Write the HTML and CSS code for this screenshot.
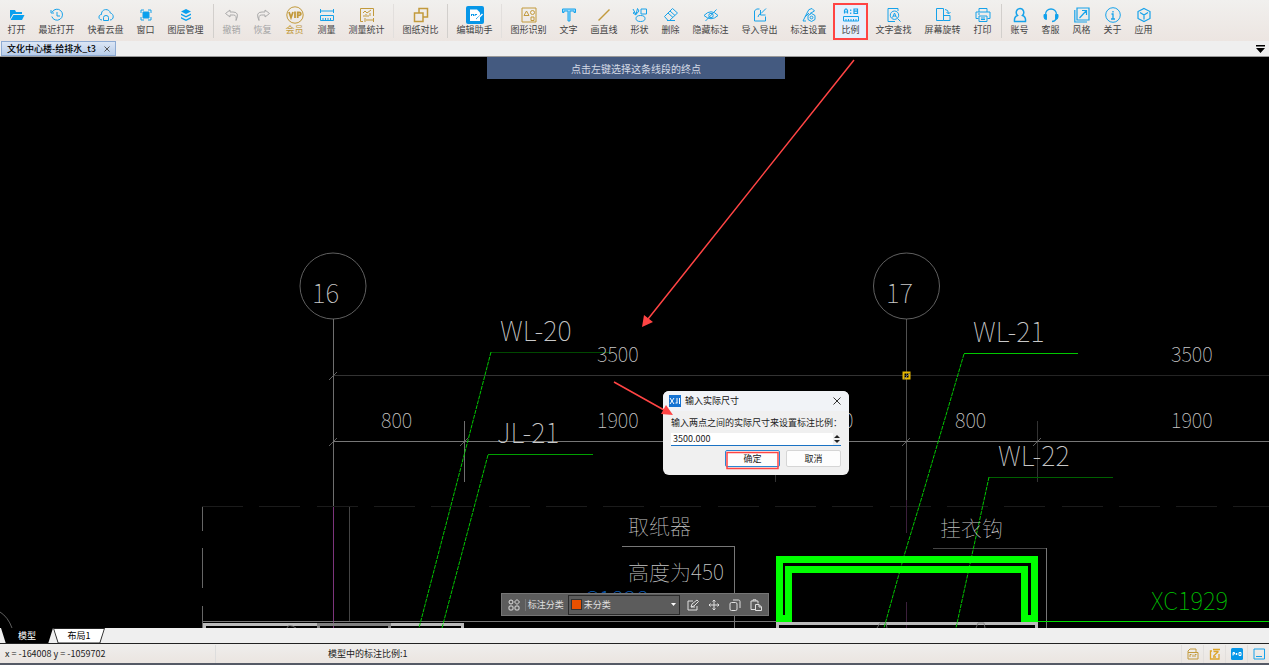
FILE: index.html
```html
<!DOCTYPE html>
<html lang="zh-CN">
<head>
<meta charset="utf-8">
<title>文化中心楼-给排水_t3</title>
<link rel="stylesheet" href="styles.css">
</head>
<body>
<div class="app">
  <header class="toolbar">
    <div class="group group-first">
      <button class="tool"><svg viewBox="0 0 16 16"><path fill="#0aa0ee" d="M1 3h5l1 2h6v2H4L1 12zM4.500 8H15.500L13 13H1.500z"/></svg>打开</button>
      <button class="tool wide"><svg viewBox="0 0 16 16" class="blue"><path d="M3.200 5A5.500 5.500 0 1 1 2.800 9.500M2 3v3h3M8 5v4h3"/></svg>最近打开</button>
      <button class="tool wide"><svg viewBox="0 0 16 16" class="blue"><path d="M4 13C0 13 0 7.500 3.500 7.500 3 1.500 11.500 1 12.300 6 16.500 7 16 13 12 13M5.500 13.500V10.500A2.500 2 0 0 1 10.500 10.500V13.500z"/></svg>快看云盘</button>
      <button class="tool"><svg viewBox="0 0 16 16" class="blue"><path fill="#0aa0ee" d="M5 5h6v6H5z"/><path d="M3 6V3h3M10 3h3v3M13 10v3h-3M6 13H3v-3"/></svg>窗口</button>
      <button class="tool wide"><svg viewBox="0 0 16 16"><path fill="#0aa0ee" d="M8 2l5 2.500L8 7 3 4.500zM3 6.500L8 9l5-2.500V8l-5 2.500L3 8zM3 10l5 2.500 5-2.500v1.500L8 14l-5-2.500z"/></svg>图层管理</button>
    </div>
    <span class="sep"></span>
    <div class="group">
      <button class="tool dim"><svg viewBox="0 0 16 16" class="gray"><path d="M6 3L1.500 6.500 6 10V8h3.500Q13 8 12 13.500 16 5 9 5H6z"/></svg>撤销</button>
      <button class="tool dim"><svg viewBox="0 0 16 16" class="gray"><path d="M10 3l4.500 3.500L10 10V8H6.500Q3 8 4 13.500 0 5 7 5h3z"/></svg>恢复</button>
      <button class="tool vip"><svg viewBox="0 0 18 18" class="gold big"><circle cx="9" cy="9" r="8.200"/><path stroke-width="1.800" d="M3 6l2 5.500L7 6M9 5.500V12M11.700 12V6.500h1.500q2 0 1.500 2-.5 1-3 1"/></svg>会员</button>
      <button class="tool"><svg viewBox="0 0 16 16" class="blue"><path d="M1.500 2v4M14.500 2v4M2 4h12M1.500 8.500h13v5h-13zM4 11v2M6.500 11v2M9 11v2M11.500 11v2"/></svg>测量</button>
      <button class="tool wide"><svg viewBox="0 0 16 16" class="gold"><path d="M4 14.500H1.500v-13h13V9M4 6l2-2 2 2 4-3M5 8v2M7 7v3M9 8v2M11 6v3M6 11v4M14.500 11v4M7 13h7"/></svg>测量统计</button>
    </div>
    <span class="sep faint"></span>
    <div class="group">
      <button class="tool wide"><svg viewBox="0 0 16 16" class="gold"><path stroke-width="1.500" d="M6 6V1.500h8.500V10H10M1.500 6H10v8.500H1.500z"/></svg>图纸对比</button>
    </div>
    <span class="sep"></span>
    <div class="group">
      <button class="tool wide"><svg viewBox="0 0 18 18" class="big"><rect width="18" height="18" rx="2" fill="#0797e8"/><path fill="#fff" d="M4 3.500h7l3 3V15H4z"/><path fill="none" stroke="#0797e8" d="M5.500 10V8l1 1 1-1v2M9 10V8.500h2M10 13l6-5"/><path stroke="#fff" stroke-width="1.500" d="M11 13.500L16.500 8"/></svg>编辑助手</button>
    </div>
    <span class="sep faint"></span>
    <div class="group group-main">
      <button class="tool wide"><svg viewBox="0 0 16 16" class="gold"><path d="M1 1h14v14H1zM3 8.500L5.500 4 8 8.500zM10 10h3v3.500h-3z"/><circle cx="11.500" cy="5.500" r="2"/></svg>图形识别</button>
      <button class="tool"><svg viewBox="0 0 16 16" class="blue"><path fill="#9bdcff" d="M1.500 2h13v3.500h-1.500V4H9v10H7V4H3v1.500H1.500z"/></svg>文字</button>
      <button class="tool mid"><svg viewBox="0 0 16 16" class="gold"><path stroke-width="1.500" d="M2.500 13.500l11-11"/></svg>画直线</button>
      <button class="tool"><svg viewBox="0 0 16 16" class="blue"><path d="M9 2h5.500v5H9zM1 2l3 5.500L7 4 5.500 1.500 4 7.500M3 5L1 6l3 2"/><ellipse cx="8.500" cy="11.500" rx="4.500" ry="3"/></svg>形状</button>
      <button class="tool"><svg viewBox="0 0 16 16" class="blue"><path d="M1.500 9.500L9.500 1.500l5 4.500-8 7.500H5zM5 6l5 4.500M4 13.500h8M7 4l5 4.500"/></svg>删除</button>
      <button class="tool wide"><svg viewBox="0 0 16 16" class="blue"><path d="M1 8.500Q8 1 15 8.500 8 15 1 8.500zM2.500 14L13.500 2.500"/><circle cx="8" cy="8.500" r="2.200"/></svg>隐藏标注</button>
      <button class="tool wide"><svg viewBox="0 0 16 16" class="blue"><path d="M7.500 2H4.500L2.500 4v10h11V9.500M14 1.500L9 6.500M8.500 3v5h5M6 10q.5-3 3-3.500"/></svg>导入导出</button>
      <button class="tool wide"><svg viewBox="0 0 16 16" class="blue"><path d="M11 1.500l2.500 2.500L9 6.500M11 1.500Q7 2 6.500 5L2 14h3M4 10l4-4"/><path d="M10.500 6.500l3.500 2v4l-3.500 2-3.500-2v-4z"/><circle cx="10.500" cy="10.500" r="1.400"/></svg>标注设置</button>
      <button class="tool active"><svg viewBox="0 0 16 16" class="blue"><path stroke-width="1.200" d="M1.500 6.500V3.500L2.500 2h1l1 1.500v3M1.500 5h3M7.700 2.500v1.500M7.700 5.500V7M11 2h3.500v4.500H11zM11 4.200h3.500"/><path d="M.5 9.500h15v4.500H.5zM3 12v2M5.500 12v2M8 12v2M10.500 12v2M13 12v2"/></svg>比例</button>
      <button class="tool wide"><svg viewBox="0 0 16 16" class="blue"><path d="M9 14.500H2V1.500h10V4M11.500 11.500l3 3M6.500 10.500L8.500 6l2 4.500M7 9h3"/><circle cx="8.500" cy="8.200" r="4.200"/></svg>文字查找</button>
      <button class="tool wide"><svg viewBox="0 0 16 16" class="blue"><path d="M1.500 1.500h7v12h-7zM8.500 8.500h6.500v5H8.500M10 2.500q3.500 0 3.500 4M11.500 5l2 2L15.500 5"/></svg>屏幕旋转</button>
      <button class="tool"><svg viewBox="0 0 16 16" class="blue"><path d="M4 5V1.500h8V5M3.500 11.500H1V5h14v6.500h-2.500M4 9h8v5.500H4zM3 7h2M6 11h4M6 12.500h4"/></svg>打印</button>
    </div>
    <span class="sep"></span>
    <div class="group">
      <button class="tool"><svg viewBox="0 0 16 16" class="blue"><path stroke-width="1.500" d="M5.500 8.500C3 6 4.500 1.500 8 1.500s5 4.500 2.500 7Q14 9.500 13.500 14.500h-11Q2 9.500 5.500 8.500z"/></svg>账号</button>
      <button class="tool"><svg viewBox="0 0 16 16" class="blue"><path stroke-width="1.300" d="M2.500 8C2 0 14 0 13.500 8M13 12q-1 2.500-4 2.500"/><path fill="#0aa0ee" d="M1 7.500h2.500v5Q1 12.500 1 10zM12.500 7.500H15V10q0 2.500-2.500 2.500z"/></svg>客服</button>
      <button class="tool"><svg viewBox="0 0 16 16" class="blue"><path stroke-width="1.200" d="M.8 3v12H13M3 1h12v12H3zM5.500 11L12 4M8 3.500h4.500V8"/></svg>风格</button>
      <button class="tool"><svg viewBox="0 0 16 16" class="blue"><circle cx="8" cy="8" r="7.300"/><path stroke-width="1.300" d="M8 4v1.500M6.500 7H8v5M6 12h4"/></svg>关于</button>
      <button class="tool"><svg viewBox="0 0 16 16" class="blue"><path stroke-width="1.200" d="M8 1.500l6 3v7l-6 3-6-3v-7zM4 5.500l4 2.500 4-2.500M8 8v4.500"/></svg>应用</button>
    </div>
  </header>

  <nav class="filebar">
    <div class="filetab"><span>文化中心楼-给排水_t3</span><button class="tabclose" aria-label="关闭标签"><svg viewBox="0 0 6 6"><path d="M.5 .5l5 5M5.500 .5l-5 5"/></svg></button></div>
    <button class="tablist" aria-label="标签列表"><svg viewBox="0 0 9 8"><path d="M0 0h9v1.500H0zM0 3h9L4.500 8z"/></svg></button>
  </nav>

  <main class="canvas">
    <svg class="drawing" viewBox="0 57 1269 571" preserveAspectRatio="xMinYMin slice">
      <g class="crisp">
        <path stroke="#6e6e6e" d="M333.500 319V507M464.500 421V482"/>
        <path stroke="#333" d="M333 375.500H906M1037.500 421V482M775.500 421V482"/>
        <path stroke="#242424" d="M906 375.500H1269"/>
        <path stroke="#777" d="M333 441.500H1269"/>
        <path stroke="#505050" d="M906.500 319V500"/>
        <path stroke="#1b1b1b" stroke-dasharray="41 16.300" d="M202 506.500H1269"/>
        <path stroke="#666" d="M202.500 507v24M202.500 548v40M202.500 606v22"/>
        <path stroke="#7c347c" d="M333.500 507V628"/>
        <path stroke="#3c203c" d="M906.500 500v33M906.500 602v26"/>
        <path stroke="#444" d="M349.500 507V622M933 548.500H1047"/>
        <path stroke="#777" d="M203 621.500H776M622 546.500H734.500V628M1046.500 548V628"/>
        <path stroke="#bbb" stroke-width="3" d="M203 624.500H464M204.500 623v5M462.500 623v5"/>
        <path stroke="#808080" stroke-width="3" d="M317 624.500H391M318.500 623v5M389.500 623v5"/>
        <path stroke="#bbb" stroke-width="3" d="M776 623.500H1038M777.500 623v5M1036.500 623v5"/>
        <path stroke="#0d0" d="M1038 621.500H1269"/>
        <path stroke="#004800" d="M491 352.500H612"/>
        <path stroke="#00a000" d="M488 454.500H593"/>
        <path stroke="#00c800" d="M964 353.500H1078"/>
        <path stroke="#006000" d="M989 477.500H1113"/>
      </g>
      <g fill="none" stroke="#777" stroke-width=".8">
        <circle cx="333" cy="286" r="33"/><circle cx="906.500" cy="286" r="33"/>
        <path d="M329 380l8-8M329 446l8-8M460 446l8-8M902 446l8-8M1033 446l8-8M0 612q8 5 12 16M287 628q1-5 9 0M877 628l3-5h6l1 5M976 628l2-5h6l1 5"/>
      </g>
      <g fill="none" stroke="#00c800" stroke-dasharray="4 1">
        <path d="M491 352L419 628M488 455L442 628M964 354L921 500 904 556"/>
        <path d="M989 477L984 500 956 628M904 556L884 628"/>
      </g>
      <path fill="#0f0" fill-rule="evenodd" d="M776 556H1038V622H1021V573H792V622H776zM783 563V615H785V566H1028V615H1031V563z"/>
      <g class="cad">
        <text class="t-axis" x="312" y="303">16</text>
        <text class="t-axis" x="886" y="303">17</text>
        <text class="t-tag" x="500" y="341">WL-20</text>
        <text class="t-tag" x="973" y="342">WL-21</text>
        <text class="t-tag" x="998" y="466">WL-22</text>
        <text class="t-tag" x="497" y="443">JL-21</text>
        <text class="t-dim" x="597" y="362">3500</text>
        <text class="t-dim" x="1171" y="362">3500</text>
        <text class="t-dim" x="381" y="428">800</text>
        <text class="t-dim" x="955" y="428">800</text>
        <text class="t-dim" x="843" y="428">0</text>
        <text class="t-dim" x="597" y="428">1900</text>
        <text class="t-dim" x="1171" y="428">1900</text>
        <text class="t-note" x="628" y="534">取纸器</text>
        <text class="t-note" x="628" y="580">高度为450</text>
        <text class="t-note" x="940" y="536">挂衣钩</text>
        <text class="t-code green" x="1151" y="610">XC1929</text>
        <text class="t-code azure" x="584" y="609">C1828</text>
      </g>
      <path class="grip" d="M903.500 372.500h6v6h-6z"/>
      <path stroke="#777" d="M904 379l6-6"/>
    </svg>

    <div class="prompt">点击左键选择这条线段的终点</div>

    <form class="dialog" onsubmit="return false">
      <div class="dialog-title">
        <svg class="dialog-logo" viewBox="0 0 12 12"><path fill="#1673d2" d="M0 0h12v12H0z"/><path fill="none" stroke="#fff" d="M1 3l4 6M5 3L1 9M8 3v5M6.500 8h2M10.500 3v6"/></svg>
        <span>输入实际尺寸</span>
        <button type="button" class="dialog-close" aria-label="关闭"><svg viewBox="0 0 8 8"><path d="M.5 .5l7 7M7.500 .5l-7 7"/></svg></button>
      </div>
      <div class="dialog-body">
        <label for="size">输入两点之间的实际尺寸来设置标注比例：</label>
        <div class="spin">
          <input id="size" type="text" value="3500.000">
          <div class="spin-buttons">
            <button type="button" aria-label="增加"><svg viewBox="0 0 6 3"><path d="M0 3L3 0l3 3z"/></svg></button>
            <button type="button" aria-label="减少"><svg viewBox="0 0 6 3"><path d="M0 0h6L3 3z"/></svg></button>
          </div>
        </div>
        <div class="dialog-actions">
          <button class="btn primary">确定</button>
          <button type="button" class="btn">取消</button>
        </div>
      </div>
    </form>

    <div class="markbar">
      <button aria-label="全部"><svg viewBox="0 0 12 12"><circle cx="3" cy="3" r="2"/><path d="M9 .5L11.500 3 9 5.500 6.500 3z"/><rect x="1" y="7" width="4" height="4" rx="1"/><rect x="7" y="7" width="4" height="4" rx="1"/></svg></button>
      <label for="kind">标注分类</label>
      <div class="pick"><span class="swatch"></span><select id="kind"><option>未分类</option></select><svg class="caret" viewBox="0 0 5 3"><path d="M0 0h5L2.500 3z"/></svg></div>
      <button aria-label="编辑"><svg viewBox="0 0 12 12"><path d="M6 2H1v9h9V7M4 8l1-3 5-4 1.500 1.500L7 7zM4 8h4"/></svg></button>
      <button aria-label="移动"><svg viewBox="0 0 12 12"><path d="M6 1v10M1 6h10M4.500 2.500L6 1l1.500 1.500M4.500 9.500L6 11l1.500-1.500M2.500 4.500L1 6l1.500 1.500M9.500 4.500L11 6 9.500 7.500"/></svg></button>
      <button aria-label="复制"><svg viewBox="0 0 12 12"><rect x="1" y="3.500" width="7" height="8" rx="1.500"/><path d="M4 1h5.500Q11 1 11 2.500V9"/></svg></button>
      <button aria-label="粘贴"><svg viewBox="0 0 12 12"><path d="M5 10.500H1V2h7v2.500M3 2V.8h3V2M5.500 5.500H9L11.500 8v3.500h-6zM9 5.500V8h2.500"/></svg></button>
    </div>

    <svg class="arrows" viewBox="0 57 1269 571" preserveAspectRatio="xMinYMin slice">
      <path stroke="#ff4444" stroke-width="1.500" d="M854 60L648 319M614 382L664 410"/>
      <path fill="#ff4444" d="M642 327l2-12 9 7zM673 415l-12-1 5-9z"/>
      <rect x="727" y="452.500" width="51" height="16" fill="none" stroke="#ff4444" stroke-width="1.500"/>
    </svg>
  </main>

  <nav class="layouts">
    <button class="layout current"><span>模型</span></button>
    <button class="layout"><span>布局1</span></button>
  </nav>
  <footer class="status">
    <span class="coords">x = -164008 y = -1059702</span>
    <span class="scale">模型中的标注比例:1</span>
    <button class="stat" aria-label="PDF 打开"><svg viewBox="0 0 12 12" class="gold"><path d="M1 4.500V3l2-2h6v3M1 11V4.500h10V11zM3 9V6.500h1.500M6 9V6.500M8 9V6.500h1.500"/></svg></button>
    <button class="stat" aria-label="PDF 编辑"><svg viewBox="0 0 12 12" class="gold"><path stroke="#dda52a" stroke-width="1.300" d="M3 3H1.500v8H10V6M4 1.500h7M4.500 3.500h5M4.500 8l5-4.500M4 9h3"/></svg></button>
    <button class="stat" aria-label="模式"><svg viewBox="0 0 12 12"><rect width="12" height="12" rx="1.500" fill="#0797e8"/><path fill="none" stroke="#fff" d="M2 7.500v-3h1.500V6H2M4.500 6h2M5.500 5v2M8 4.500h2v3H8z"/></svg></button>
    <button class="stat" aria-label="显示"><svg viewBox="0 0 12 12" class="blue"><path d="M1 1h10.500v10H1zM3 8.500h6"/></svg></button>
  </footer>
</div>
</body>
</html>
```
FILE: styles.css
```css
* { box-sizing: border-box; }
html, body { height: 100%; margin: 0; }
body {
  font: 9px/12px "Noto Sans CJK SC", sans-serif;
  color: #222;
  overflow: hidden;
}
button, input, select { font: inherit; color: inherit; margin: 0; padding: 0; border: 0; background: none; }
svg { display: block; fill: none; }
.blue { stroke: #16a2ea; }
.gold { stroke: #c29a3c; }
.gray { stroke: #aaa; }
.app { display: flex; flex-direction: column; height: 100%; }

.toolbar {
  display: flex;
  height: 41px;
  flex: none;
  background: linear-gradient(#f1f0ee, #ece5e1);
}
.group { display: flex; flex: none; }
.group-first { padding: 0 1px; }
.group-main { padding-right: 1px; }
.tool {
  width: 31px;
  display: flex;
  flex-direction: column;
  align-items: center;
  justify-content: flex-end;
  gap: 1px;
  padding-bottom: 5px;
  height: 41px;
  white-space: nowrap;
  color: #444;
}
.tool svg { width: 16px; height: 16px; }
.tool svg.big { width: 18px; height: 18px; margin-bottom: -1px; }
.tool.wide { width: 49px; }
.tool.mid { width: 40px; }
.tool.vip { width: 33px; color: #c29a3c; }
.tool.dim { color: #a5a5a5; }
.tool.active {
  width: 35px;
  height: 37px;
  margin: 3px 1px 0 0;
  padding-bottom: 2px;
  border: 2px solid #f44;
  background: #e6effc;
}
.sep { width: 1px; margin: 4px 2px 3px; background: #d2cfcc; }
.sep.faint { background: #e2dfdd; }

.filebar {
  display: flex;
  flex: none;
  align-items: center;
  justify-content: space-between;
  height: 16px;
  padding: 0 4px 0 1px;
  background: #efefef;
  border-bottom: 1px solid #999;
}
.filetab {
  display: flex;
  align-items: center;
  gap: 8px;
  height: 15px;
  padding: 0 5px;
  border: 1px solid #8eabd3;
  background: linear-gradient(#dbe6f5, #b9cde9);
  color: #000;
  font-weight: 500;
}
.tabclose svg { width: 6px; height: 6px; stroke: #555; }
.tablist svg { width: 9px; height: 8px; fill: #000; }

.canvas { position: relative; flex: 1; min-height: 0; background: #000; overflow: hidden; }
.drawing, .arrows { position: absolute; inset: 0; width: 100%; height: 100%; }
.arrows { pointer-events: none; }
.crisp { shape-rendering: crispEdges; }
.cad { font-family: "Noto Sans CJK SC", sans-serif; font-weight: 100; fill: #c8c8c8; }
.t-axis { font-size: 26px; }
.t-tag { font-size: 27px; }
.t-dim { font-size: 20px; }
.t-note { font-size: 21px; }
.t-code { font-size: 24px; }
.green { fill: #00c000; }
.azure { fill: #0a5cb4; }
.grip { stroke: #e8b800; stroke-width: 2px; }

.prompt {
  position: absolute;
  top: 0;
  left: 487px;
  width: 298px;
  padding: 6px 0 5px;
  background: #445a80;
  color: #d5dbe6;
  font-size: 10px;
  line-height: 11px;
  text-align: center;
}

.dialog {
  position: absolute;
  left: 663px;
  top: 334px;
  width: 186px;
  background: #f0f0f0;
  border-radius: 6px;
  overflow: hidden;
}
.dialog-title { display: flex; align-items: center; gap: 4px; height: 20px; padding: 0 8px 0 6px; background: #f1f3f7; color: #111; }
.dialog-logo { width: 12px; height: 12px; }
.dialog-close { margin-left: auto; }
.dialog-close svg { width: 8px; height: 8px; stroke: #333; }
.dialog-body { padding: 6px 8px 8px; }
.dialog-body label { display: block; white-space: nowrap; }
.spin { display: flex; height: 13px; margin-top: 4px; background: #fff; border-bottom: 1px solid #1a72c4; }
.spin input { flex: 1; min-width: 0; padding-left: 2px; outline: 0; }
.spin-buttons { display: flex; flex-direction: column; justify-content: space-evenly; width: 8px; background: #f0f0f0; }
.spin-buttons svg { width: 6px; height: 3px; margin: 0 auto; fill: #222; }
.spin-buttons button { display: block; line-height: 0; }
.dialog-actions { display: flex; justify-content: flex-end; gap: 6px; margin-top: 4px; }
.btn { width: 55px; height: 17px; background: #fdfdfd; border: 1px solid #d5d5d5; border-radius: 2px; }
.btn.primary { border-color: #2a86d4; }

.markbar {
  position: absolute;
  left: 501px;
  bottom: 12px;
  display: flex;
  align-items: center;
  width: 268px;
  height: 23px;
  padding: 0 2px;
  background: #5c5c5c;
  border: 1px solid #757575;
  color: #e0e0e0;
}
.markbar button { flex: 1; }
.markbar button svg { width: 12px; height: 12px; margin: 0 auto; stroke: #e0e0e0; }
.markbar label { padding: 0 4px 0 2px; border-left: 1px solid #777; }
.pick { display: flex; align-items: center; gap: 2px; width: 112px; height: 20px; padding: 0 3px 0 2px; margin-right: 3px; border: 1px solid #2a2a2a; background: #5c5c5c; }
.swatch { width: 11px; height: 11px; background: #e85000; border: 1px solid #333; }
.pick select { flex: 1; appearance: none; outline: 0; }
.caret { width: 5px; height: 3px; fill: #fff; }

.layouts { display: flex; flex: none; height: 16px; padding-left: 1px; background: #efefef; border-bottom: 1px solid #222; }
.layout {
  width: 52px;
  height: 15px;
  padding: 0 1px;
  background: #222;
  color: #000;
  clip-path: polygon(0 0, 100% 0, 91% 100%, 9% 100%);
}
.layout span {
  display: block;
  height: 14px;
  line-height: 14px;
  background: #fff;
  clip-path: polygon(0 0, 100% 0, 91% 100%, 9% 100%);
}
.layout.current { background: #000; color: #fff; }
.layout.current span { background: #000; }

.status {
  display: flex;
  flex: none;
  align-items: center;
  height: 21px;
  padding-left: 5px;
  background: linear-gradient(#efeeec, #ebe5e1);
  border-bottom: 2px solid #555a66;
}
.coords { width: 211px; border-right: 1px solid #ddd; line-height: 18px; }
.scale { flex: 1; padding-left: 112px; }
.stat { width: 22px; border-left: 1px solid #e2dfdd; height: 18px; }
.stat svg { width: 12px; height: 12px; margin: 0 auto; }
```
